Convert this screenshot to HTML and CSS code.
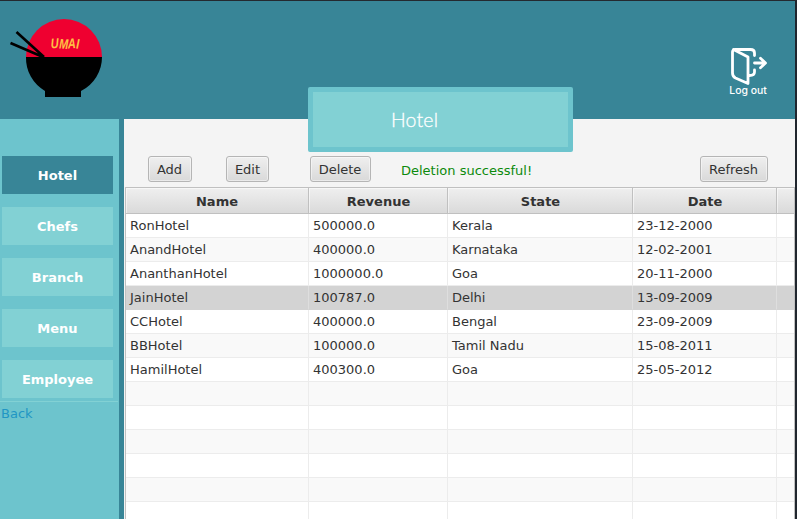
FILE: index.html
```html
<!DOCTYPE html>
<html lang="en">
<head>
<meta charset="utf-8">
<title>Hotel</title>
<link rel="stylesheet" href="styles.css">
</head>
<body>
<div class="window">
  <header class="header">
    <svg class="logo" width="100" height="90" viewBox="0 0 100 90" aria-label="Umai">
      <path class="logo-top" d="M18 49a38 38 0 0 1 76 0z"/>
      <path d="M18 49h76a38 38 0 0 1-21 34v6H37v-6a38 38 0 0 1-19-34z"/>
      <path class="sticks" d="M8.500 24L36 49M2.500 35L35 49"/>
      <text class="logo-text" x="43" y="40.500" textLength="28" lengthAdjust="spacingAndGlyphs" rotate="-4 3 -3 4">UMAI</text>
    </svg>
    <button class="logout">
      <svg width="38" height="40" viewBox="0 0 38 40">
        <path d="M4.500 2.500L19 10V36.500L6.500 31Q3.500 29.500 3.500 26V5Q3.500 2.500 6 2.500H21.500Q25.500 2.500 25.500 6V8.500M25.500 23V25Q25.500 28.500 20.500 28.500H20M25.500 16H36M31.500 11.300L36.500 16L31.500 20.700"/>
      </svg>
      <span>Log out</span>
    </button>
  </header>
  <div class="title">Hotel</div>
  <div class="body">
    <nav class="sidebar">
      <button class="nav active">Hotel</button>
      <button class="nav">Chefs</button>
      <button class="nav">Branch</button>
      <button class="nav">Menu</button>
      <button class="nav">Employee</button>
      <a class="back">Back</a>
    </nav>
    <main class="main">
      <div class="toolbar">
        <button class="btn add">Add</button>
        <button class="btn edit">Edit</button>
        <button class="btn delete">Delete</button>
        <span class="status">Deletion successful!</span>
        <button class="btn refresh">Refresh</button>
      </div>
      <div class="table">
        <div class="row head"><span>Name</span><span>Revenue</span><span>State</span><span>Date</span><span></span></div>
        <div class="row"><span>RonHotel</span><span>500000.0</span><span>Kerala</span><span>23-12-2000</span><span></span></div>
        <div class="row"><span>AnandHotel</span><span>400000.0</span><span>Karnataka</span><span>12-02-2001</span><span></span></div>
        <div class="row"><span>AnanthanHotel</span><span>1000000.0</span><span>Goa</span><span>20-11-2000</span><span></span></div>
        <div class="row selected"><span>JainHotel</span><span>100787.0</span><span>Delhi</span><span>13-09-2009</span><span></span></div>
        <div class="row"><span>CCHotel</span><span>400000.0</span><span>Bengal</span><span>23-09-2009</span><span></span></div>
        <div class="row"><span>BBHotel</span><span>100000.0</span><span>Tamil Nadu</span><span>15-08-2011</span><span></span></div>
        <div class="row"><span>HamilHotel</span><span>400300.0</span><span>Goa</span><span>25-05-2012</span><span></span></div>
        <div class="row"><span></span><span></span><span></span><span></span><span></span></div>
        <div class="row"><span></span><span></span><span></span><span></span><span></span></div>
        <div class="row"><span></span><span></span><span></span><span></span><span></span></div>
        <div class="row"><span></span><span></span><span></span><span></span><span></span></div>
        <div class="row"><span></span><span></span><span></span><span></span><span></span></div>
        <div class="row"><span></span><span></span><span></span><span></span><span></span></div>
      </div>
    </main>
  </div>
</div>
</body>
</html>
```
FILE: styles.css
```css
* { box-sizing: border-box; }
body {
  margin: 0;
  font: 13px "DejaVu Sans", sans-serif;
  color: #333;
}
button { font: inherit; margin: 0; border: 0; padding: 0; }
.window {
  position: relative;
  height: 519px;
  display: flex;
  flex-direction: column;
  overflow: hidden;
  border-top: 1px solid #24292f;
  border-right: 2px solid #20262e;
}
.header {
  flex: none;
  height: 118px;
  display: flex;
  justify-content: space-between;
  align-items: flex-start;
  padding: 7px 28px 0 8px;
  background: #388597;
}
.logo-top { fill: #ef0030; }
.sticks { stroke: #000; stroke-width: 2.6; fill: none; }
.logo-text {
  font: italic bold 14px "Liberation Sans", sans-serif;
  fill: #ffc043;
}
.logout {
  display: flex;
  flex-direction: column;
  align-items: center;
  margin-top: 39px;
  background: none;
  color: #fff;
  font: 500 10.4px/12px Inter, sans-serif;
}
.logout svg {
  fill: none;
  stroke: #fff;
  stroke-width: 2.8;
  stroke-linecap: round;
  stroke-linejoin: round;
  margin-bottom: -2px;
}
.title {
  position: absolute;
  left: 308px;
  top: 86px;
  width: 265px;
  height: 65px;
  padding-left: 78px;
  border: 5px solid #6dc4cd;
  border-radius: 2px;
  background: #82d1d4;
  color: #fff;
  font: 300 19.5px/56px Lato, sans-serif;
  letter-spacing: .2px;
  -webkit-text-stroke: .3px #fff;
}
.body { flex: 1; min-height: 0; display: flex; }
.sidebar {
  width: 124px;
  flex: none;
  display: flex;
  flex-direction: column;
  gap: 13px;
  padding-top: 37px;
  border-right: 5px solid #388597;
  background: #6dc4cd;
}
.nav {
  flex: none;
  width: 111px;
  height: 38px;
  margin-left: 2px;
  background: #82d1d4;
  color: #fff;
  font-weight: bold;
}
.nav.active { background: #388597; }
.back {
  width: 118px;
  margin-top: -10px;
  padding: 3px 0 0 1px;
  border-top: 1px solid #82d1d4;
  color: #2196c4;
  line-height: 17px;
}
.main {
  flex: 1;
  min-width: 0;
  display: flex;
  flex-direction: column;
  background: #f4f4f4;
}
.toolbar {
  flex: none;
  height: 68px;
  display: flex;
  align-items: flex-start;
  padding: 37px 27px 0 24px;
}
.btn {
  height: 26px;
  border: 1px solid #b5b5b5;
  border-radius: 3px;
  background: linear-gradient(#efefef, #d9d9d9);
  box-shadow: inset 0 0 0 1px rgba(255, 255, 255, .45);
  color: #333;
}
.add { width: 44px; padding-right: 1px; }
.edit { width: 43px; margin-left: 34px; }
.delete { width: 61px; margin-left: 41px; padding-right: 1px; }
.refresh { width: 68px; margin-left: auto; padding-right: 1px; }
.status { margin-left: 30px; line-height: 30px; color: #0c8a0c; }
.table {
  flex: 1;
  min-height: 0;
  margin-left: 1px;
  overflow: hidden;
  border: 1px solid #c0c0c0;
  border-bottom: 0;
  background: #fff;
}
.row {
  display: grid;
  grid-template-columns: 183px 139px 185px 144px 17px;
  height: 24px;
  line-height: 23px;
}
.row span {
  padding-left: 4px;
  border-right: 1px solid #ececec;
  border-bottom: 1px solid #ececec;
}
.row span:last-child { border-right: 0; }
.row:nth-child(odd) { background: #f9f9f9; }
.row.selected { background: #d3d3d3; box-shadow: 0 -1px #d3d3d3; }
.row.selected span { border-right-color: #dedede; border-bottom-color: #d3d3d3; }
.row.head {
  height: 26px;
  line-height: 28px;
  background: linear-gradient(#efefef, #d9d9d9);
  font-weight: bold;
  text-align: center;
}
.row.head span {
  padding: 0 0 0 1px;
  height: 26px;
  border-color: #c0c0c0;
  box-shadow: inset 1px 1px rgba(255, 255, 255, .5);
}
.row.head span:first-child { padding-left: 0; }
```
